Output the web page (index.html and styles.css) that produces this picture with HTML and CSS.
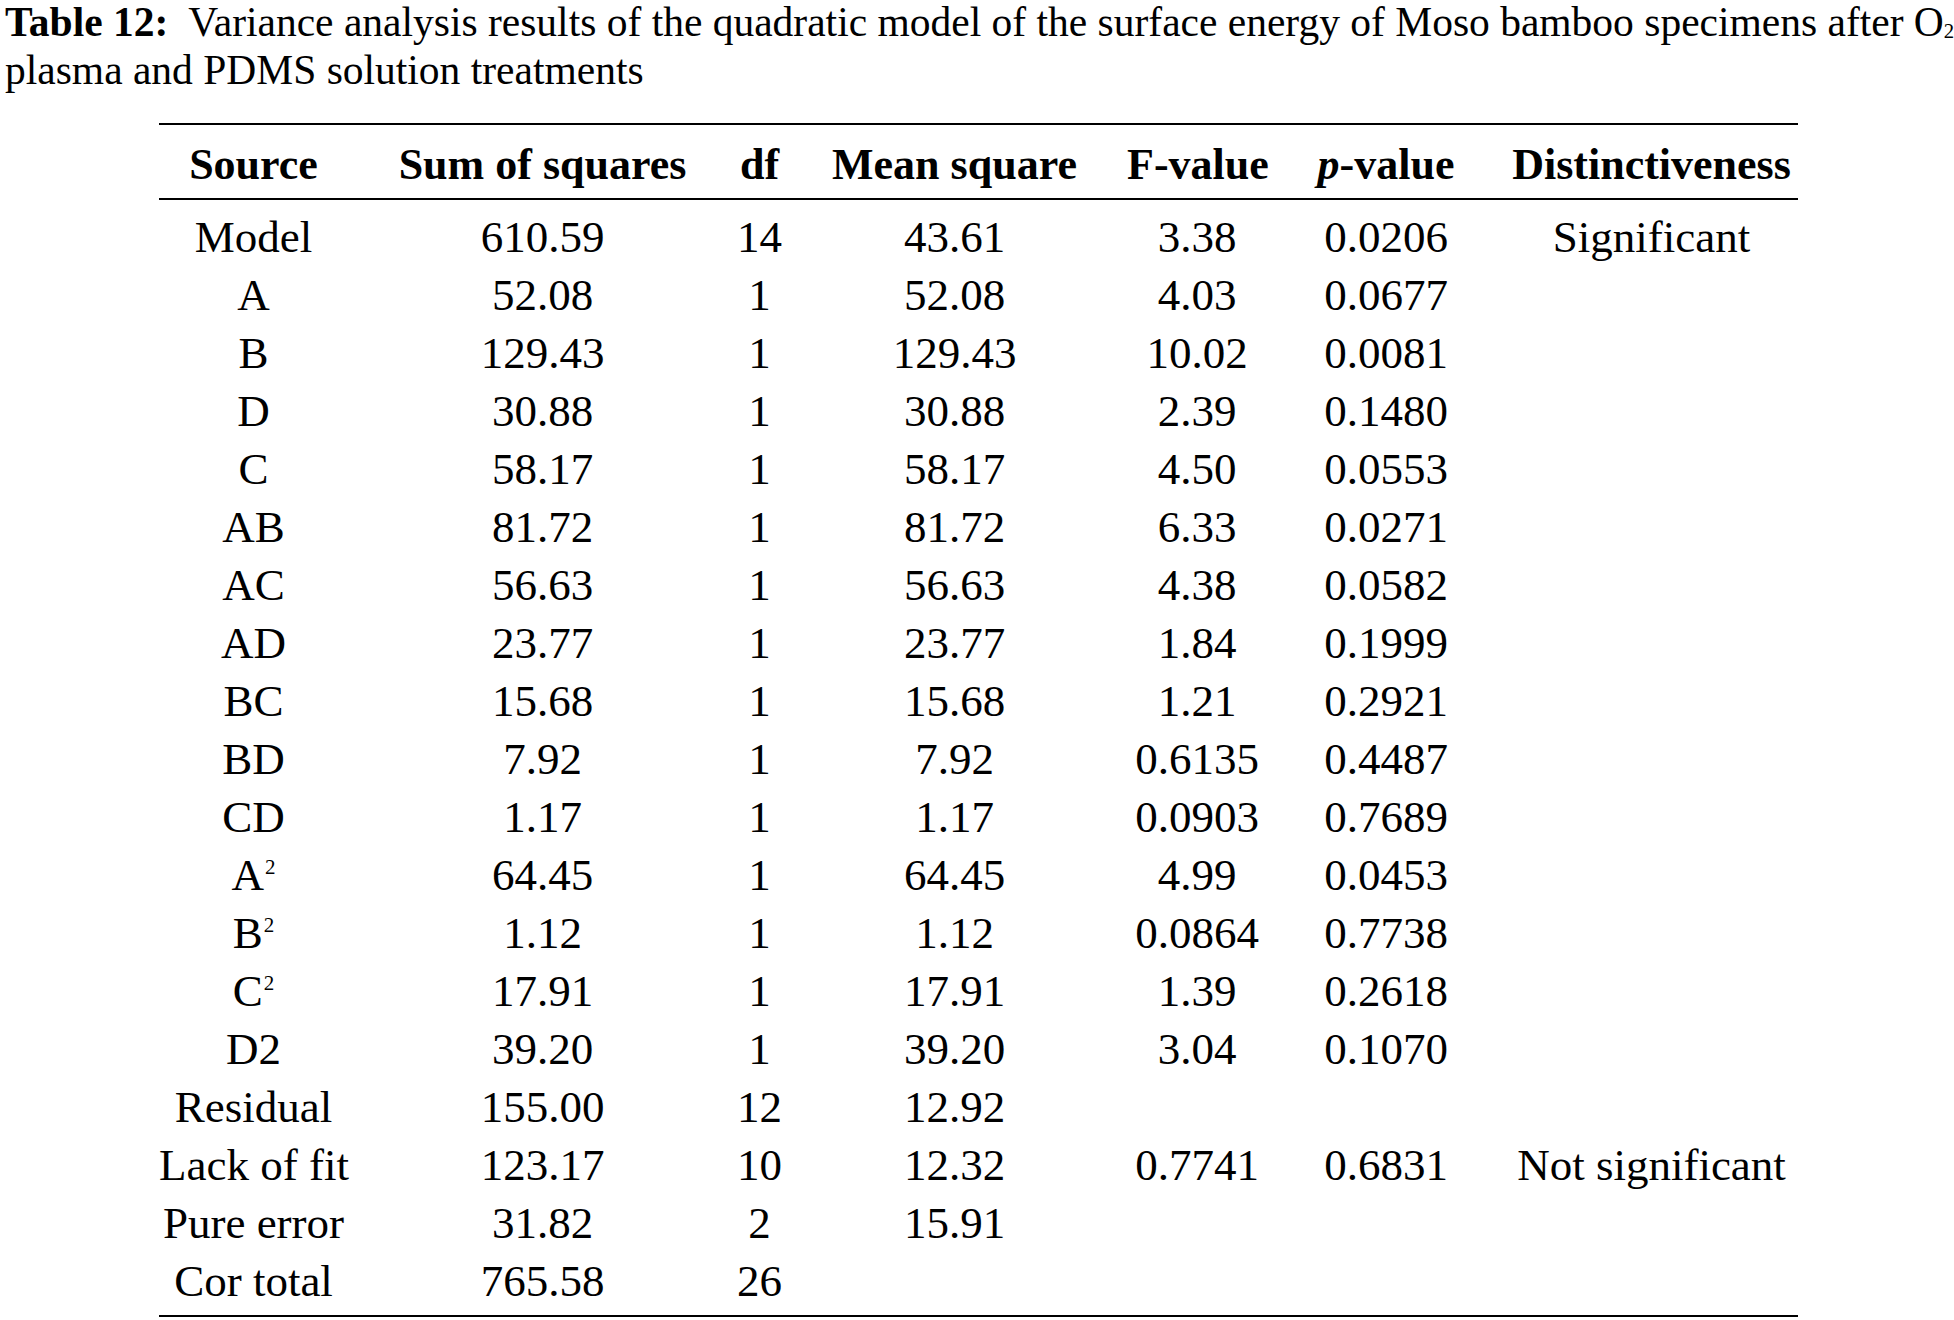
FILE: index.html
```html
<!DOCTYPE html>
<html lang="en">
<head>
<meta charset="utf-8">
<title>Table 12</title>
<link rel="stylesheet" href="styles.css">
</head>
<body>
<div class="page">
  <p class="caption"><span class="line"><b>Table 12:</b>&nbsp; Variance analysis results of the quadratic model of the surface energy of Moso bamboo specimens after O<sub>2</sub></span><span class="line">plasma and PDMS solution treatments</span></p>
  <div class="table">
    <div class="row head">
      <div class="cell">Source</div>
      <div class="cell">Sum of squares</div>
      <div class="cell">df</div>
      <div class="cell">Mean square</div>
      <div class="cell">F-value</div>
      <div class="cell"><i>p</i>-value</div>
      <div class="cell">Distinctiveness</div>
    </div>
    <div class="tbody">
      <div class="row"><div class="cell">Model</div><div class="cell">610.59</div><div class="cell">14</div><div class="cell">43.61</div><div class="cell">3.38</div><div class="cell">0.0206</div><div class="cell">Significant</div></div>
      <div class="row"><div class="cell">A</div><div class="cell">52.08</div><div class="cell">1</div><div class="cell">52.08</div><div class="cell">4.03</div><div class="cell">0.0677</div><div class="cell"></div></div>
      <div class="row"><div class="cell">B</div><div class="cell">129.43</div><div class="cell">1</div><div class="cell">129.43</div><div class="cell">10.02</div><div class="cell">0.0081</div><div class="cell"></div></div>
      <div class="row"><div class="cell">D</div><div class="cell">30.88</div><div class="cell">1</div><div class="cell">30.88</div><div class="cell">2.39</div><div class="cell">0.1480</div><div class="cell"></div></div>
      <div class="row"><div class="cell">C</div><div class="cell">58.17</div><div class="cell">1</div><div class="cell">58.17</div><div class="cell">4.50</div><div class="cell">0.0553</div><div class="cell"></div></div>
      <div class="row"><div class="cell">AB</div><div class="cell">81.72</div><div class="cell">1</div><div class="cell">81.72</div><div class="cell">6.33</div><div class="cell">0.0271</div><div class="cell"></div></div>
      <div class="row"><div class="cell">AC</div><div class="cell">56.63</div><div class="cell">1</div><div class="cell">56.63</div><div class="cell">4.38</div><div class="cell">0.0582</div><div class="cell"></div></div>
      <div class="row"><div class="cell">AD</div><div class="cell">23.77</div><div class="cell">1</div><div class="cell">23.77</div><div class="cell">1.84</div><div class="cell">0.1999</div><div class="cell"></div></div>
      <div class="row"><div class="cell">BC</div><div class="cell">15.68</div><div class="cell">1</div><div class="cell">15.68</div><div class="cell">1.21</div><div class="cell">0.2921</div><div class="cell"></div></div>
      <div class="row"><div class="cell">BD</div><div class="cell">7.92</div><div class="cell">1</div><div class="cell">7.92</div><div class="cell">0.6135</div><div class="cell">0.4487</div><div class="cell"></div></div>
      <div class="row"><div class="cell">CD</div><div class="cell">1.17</div><div class="cell">1</div><div class="cell">1.17</div><div class="cell">0.0903</div><div class="cell">0.7689</div><div class="cell"></div></div>
      <div class="row"><div class="cell">A<sup>2</sup></div><div class="cell">64.45</div><div class="cell">1</div><div class="cell">64.45</div><div class="cell">4.99</div><div class="cell">0.0453</div><div class="cell"></div></div>
      <div class="row"><div class="cell">B<sup>2</sup></div><div class="cell">1.12</div><div class="cell">1</div><div class="cell">1.12</div><div class="cell">0.0864</div><div class="cell">0.7738</div><div class="cell"></div></div>
      <div class="row"><div class="cell">C<sup>2</sup></div><div class="cell">17.91</div><div class="cell">1</div><div class="cell">17.91</div><div class="cell">1.39</div><div class="cell">0.2618</div><div class="cell"></div></div>
      <div class="row"><div class="cell">D2</div><div class="cell">39.20</div><div class="cell">1</div><div class="cell">39.20</div><div class="cell">3.04</div><div class="cell">0.1070</div><div class="cell"></div></div>
      <div class="row"><div class="cell">Residual</div><div class="cell">155.00</div><div class="cell">12</div><div class="cell">12.92</div><div class="cell"></div><div class="cell"></div><div class="cell"></div></div>
      <div class="row"><div class="cell">Lack of fit</div><div class="cell">123.17</div><div class="cell">10</div><div class="cell">12.32</div><div class="cell">0.7741</div><div class="cell">0.6831</div><div class="cell">Not significant</div></div>
      <div class="row"><div class="cell">Pure error</div><div class="cell">31.82</div><div class="cell">2</div><div class="cell">15.91</div><div class="cell"></div><div class="cell"></div><div class="cell"></div></div>
      <div class="row"><div class="cell">Cor total</div><div class="cell">765.58</div><div class="cell">26</div><div class="cell"></div><div class="cell"></div><div class="cell"></div><div class="cell"></div></div>
    </div>
  </div>
</div>
</body>
</html>
```

FILE: styles.css
```css
html, body {
  margin: 0;
  padding: 0;
  background: #ffffff;
}

body {
  width: 1954px;
  height: 1320px;
  overflow: hidden;
  font-family: "Liberation Serif", "Times New Roman", serif;
  color: #000;
}

.page {
  display: flex;
  flex-direction: column;
  align-items: flex-start;
}

.caption {
  margin: -1px 0 0 5px;
  font-size: 41.5px;
  line-height: 47.5px;
  display: flex;
  flex-direction: column;
  white-space: nowrap;
}

.caption b {
  font-weight: bold;
}

.caption sub {
  font-size: 0.5em;
  line-height: 0;
  vertical-align: -2px;
}

.table {
  margin: 29px 0 0 159px;
  width: 1639px;
  border-top: 2px solid #000;
  border-bottom: 2px solid #000;
}

.row {
  display: grid;
  grid-template-columns: 189px 389px 45px 345px 140px 238px 293px;
}

.cell {
  text-align: center;
  white-space: nowrap;
}

.head {
  font-weight: bold;
  font-size: 44px;
  line-height: 58px;
  padding: 11px 0 4px;
  border-bottom: 2px solid #000;
}

.head i {
  font-style: italic;
}

.tbody {
  display: flex;
  flex-direction: column;
  font-size: 45px;
  line-height: 58px;
  padding: 8px 0 5px;
}

.tbody .row {
  height: 58px;
}

.tbody sup {
  font-size: 21px;
  line-height: 0;
  vertical-align: 16px;
  margin-left: 1px;
}
```
